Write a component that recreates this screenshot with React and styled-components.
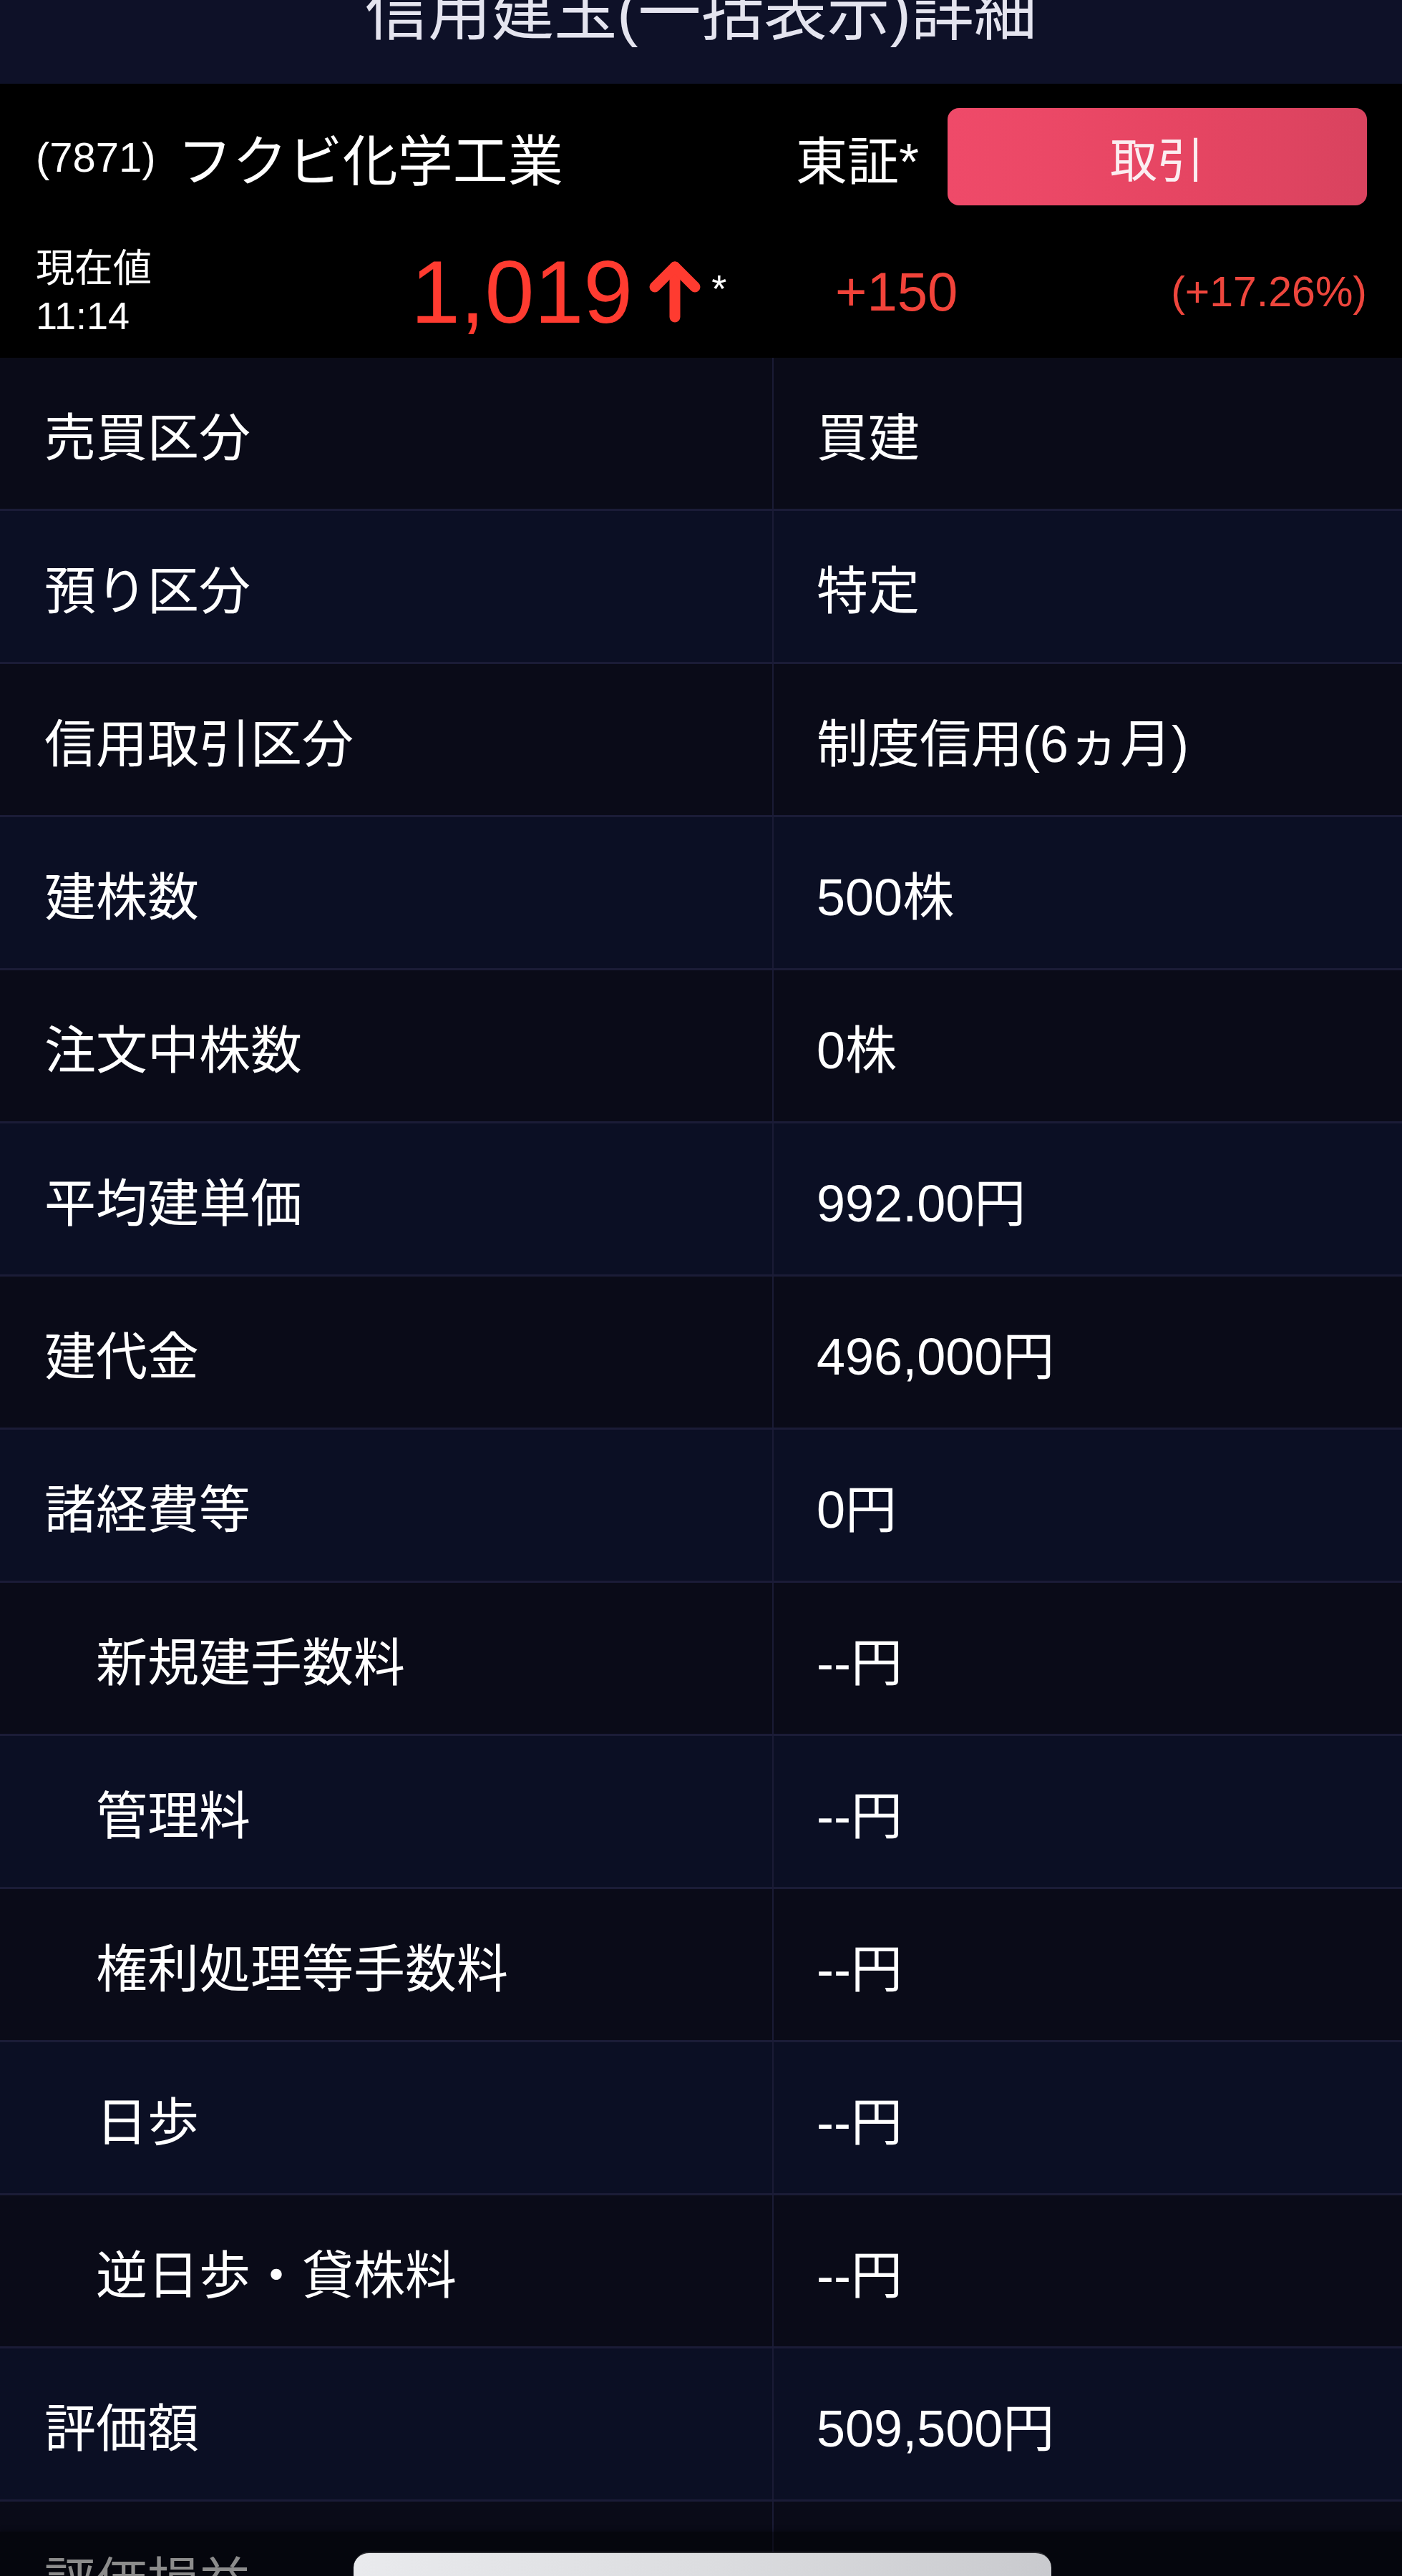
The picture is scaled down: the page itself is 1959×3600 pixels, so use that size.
import React from 'react'
import styled, { createGlobalStyle } from 'styled-components'

const GlobalStyle = createGlobalStyle`
  body {
    margin: 0;
    background: #000;
    font-family: "Liberation Sans", "Noto Sans CJK JP", sans-serif;
  }
`

const Screen = styled.div`
  position: relative;
  width: 1959px;
  height: 3600px;
  overflow: hidden;
  background: #0a0c18;
  color: #fff;
`

const NavBar = styled.div`
  height: 117px;
  overflow: hidden;
  background: #0e1128;
  display: flex;
  justify-content: center;
`

const NavTitle = styled.div`
  margin-top: -42px;
  font-size: 88px;
  line-height: 120px;
  color: #e4e4ef;
  white-space: nowrap;
`

const QuoteBox = styled.div`
  background: #000;
  height: 383px;
  display: flex;
  flex-direction: column;
`

const StockRow = styled.div`
  height: 204px;
  display: flex;
  align-items: center;
  padding: 0 49px 0 50px;
`

const Code = styled.span`
  font-size: 58px;
`

const Name = styled.span`
  font-size: 77px;
  margin-left: 30px;
  flex: 1;
`

const Market = styled.span`
  font-size: 72px;
  margin-right: 40px;
`

const TradeButton = styled.div`
  width: 586px;
  height: 136px;
  border-radius: 16px;
  background: linear-gradient(90deg, #ef4a69 0%, #e54562 60%, #d9435f 100%);
  display: flex;
  align-items: center;
  justify-content: center;
  font-size: 66px;
  color: #fbeef1;
`

const PriceRow = styled.div`
  flex: 1;
  display: flex;
  align-items: center;
  padding: 0 49px 6px 50px;
`

const NowLabel = styled.div`
  width: 524px;
  font-size: 54px;
  line-height: 66px;
`

const Price = styled.div`
  width: 593px;
  display: flex;
  align-items: center;
  color: ${p => p.color};
  font-size: 124px;
  line-height: 1;
`

const Star = styled.span`
  align-self: flex-start;
  margin-top: 30px;
  margin-left: 14px;
  font-size: 54px;
  color: #fff;
`

const Change = styled.div`
  flex: 1;
  font-size: 76px;
  color: ${p => p.color};
`

const Percent = styled.div`
  font-size: 59px;
  color: ${p => p.color};
`

const Table = styled.div`
  display: flex;
  flex-direction: column;
`

const Row = styled.div`
  display: grid;
  grid-template-columns: 1081px 1fr;
  height: 211px;
  border-bottom: 3px solid #1b1c37;
  background: ${p => (p.alt ? '#0b0f24' : '#0a0b18')};
`

const Label = styled.div`
  display: flex;
  align-items: center;
  padding-left: ${p => (p.indent ? '134px' : '62px')};
  border-right: 2px solid #1a1b35;
  font-size: 72px;
`

const Value = styled.div`
  display: flex;
  align-items: center;
  padding-left: 60px;
  font-size: 72px;
`

const BottomShade = styled.div`
  position: absolute;
  left: 0;
  right: 0;
  top: 3538px;
  bottom: 0;
  background: rgba(0, 0, 0, 0.45);
  box-shadow: 0 -2px 6px rgba(0, 0, 0, 0.25);
`

const SheetButton = styled.div`
  position: absolute;
  left: 494px;
  top: 28px;
  width: 975px;
  height: 140px;
  border-radius: 22px;
  border-top: 2px solid #2a2b30;
  background: linear-gradient(90deg, #e9eaed 0%, #dcdde0 50%, #c9cace 100%);
`

const UpArrow = () => (
  <svg width="74" height="90" viewBox="0 0 74 90" style={{ marginLeft: 22 }}>
    <g fill="none" stroke="#ff3b30" strokeWidth="15" strokeLinecap="round" strokeLinejoin="round">
      <path d="M37 10 L37 80" />
      <path d="M9 38 L37 10 L65 38" />
    </g>
  </svg>
)

const rows = [
  ['売買区分', '買建'],
  ['預り区分', '特定'],
  ['信用取引区分', '制度信用(6ヵ月)'],
  ['建株数', '500株'],
  ['注文中株数', '0株'],
  ['平均建単価', '992.00円'],
  ['建代金', '496,000円'],
  ['諸経費等', '0円'],
  ['新規建手数料', '--円', true],
  ['管理料', '--円', true],
  ['権利処理等手数料', '--円', true],
  ['日歩', '--円', true],
  ['逆日歩・貸株料', '--円', true],
  ['評価額', '509,500円'],
  ['評価損益', ''],
]

const App = () => (
  <Screen>
    <GlobalStyle />
    <NavBar>
      <NavTitle>信用建玉(一括表示)詳細</NavTitle>
    </NavBar>

    <QuoteBox>
      <StockRow>
        <Code>(7871)</Code>
        <Name>フクビ化学工業</Name>
        <Market>東証*</Market>
        <TradeButton>取引</TradeButton>
      </StockRow>
      <PriceRow>
        <NowLabel>
          現在値<br />11:14
        </NowLabel>
        <Price color="#ff3b30">
          1,019
          <UpArrow />
          <Star>*</Star>
        </Price>
        <Change color="#f2433a">+150</Change>
        <Percent color="#ee463d">(+17.26%)</Percent>
      </PriceRow>
    </QuoteBox>

    <Table>
      {rows.map(([label, value, indent], i) => (
        <Row key={label} alt={i % 2 === 1}>
          <Label indent={indent}>{label}</Label>
          <Value>{value}</Value>
        </Row>
      ))}
    </Table>

    <BottomShade>
      <SheetButton />
    </BottomShade>
  </Screen>
)

export default App
